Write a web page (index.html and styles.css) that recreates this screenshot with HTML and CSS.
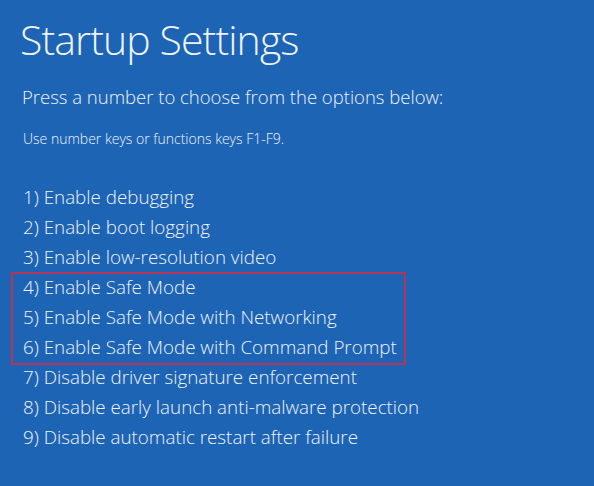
FILE: index.html
```html
<!DOCTYPE html>
<html>
<head>
<meta charset="utf-8">
<link rel="stylesheet" href="styles.css">
</head>
<body>
<main class="screen">
  <h1 class="title">Startup Settings</h1>
  <p class="prompt">Press a number to choose from the options below:</p>
  <p class="hint">Use number keys or functions keys F1-F9.</p>
  <ul class="options">
    <li>1) Enable debugging</li>
    <li>2) Enable boot logging</li>
    <li>3) Enable low-resolution video</li>
    <li class="group">
      <ul class="boxed">
        <li>4) Enable Safe Mode</li>
        <li>5) Enable Safe Mode with Networking</li>
        <li>6) Enable Safe Mode with Command Prompt</li>
      </ul>
    </li>
    <li>7) Disable driver signature enforcement</li>
    <li>8) Disable early launch anti-malware protection</li>
    <li>9) Disable automatic restart after failure</li>
  </ul>
</main>
</body>
</html>
```

FILE: styles.css
```css
html, body {
  margin: 0;
  padding: 0;
  background: #1e64b4;
}
.screen {
  width: 594px;
  height: 486px;
  box-sizing: border-box;
  padding: 13px 0 0 20px;
  color: #eef3fa;
  font-family: "Open Sans", "Noto Sans", sans-serif;
  font-weight: 300;
  overflow: hidden;
}
.title {
  margin: 0;
  font-size: 41px;
  font-weight: 300;
  line-height: 52px;
  letter-spacing: -0.9px;
}
.prompt {
  margin: 20px 0 0 2px;
  font-size: 18.5px;
  line-height: 24px;
}
.hint {
  margin: 21px 0 0 3px;
  font-size: 14px;
  line-height: 18px;
}
.options {
  list-style: none;
  margin: 34px 0 0 0;
  padding: 0;
}
.options li {
  font-size: 18.8px;
  line-height: 30px;
  padding-left: 3px;
}
.options .group {
  padding-left: 0;
}
.boxed {
  list-style: none;
  box-sizing: border-box;
  width: 395px;
  margin: 0 0 -3px -9px;
  padding: 0 0 3px 12px;
  outline: 2px solid #b8335a;
  outline-offset: -2px;
}
.options .boxed li {
  padding-left: 0;
}
```
